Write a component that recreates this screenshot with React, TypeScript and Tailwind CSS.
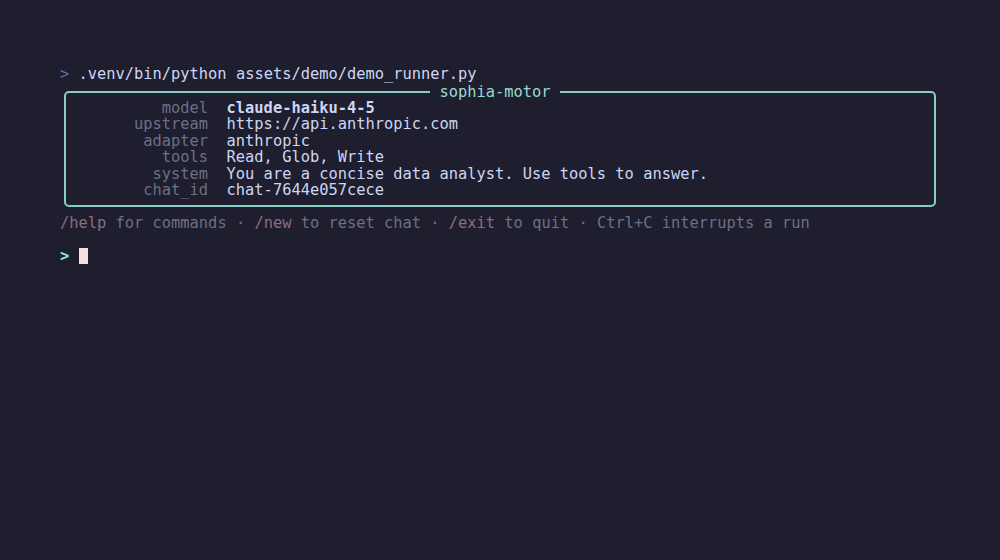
import React from "react";

const rows: [string, string, boolean?][] = [
  ["model", "claude-haiku-4-5", true],
  ["upstream", "https://api.anthropic.com"],
  ["adapter", "anthropic"],
  ["tools", "Read, Glob, Write"],
  ["system", "You are a concise data analyst. Use tools to answer."],
  ["chat_id", "chat-7644e057cece"],
];

export default function App() {
  return (
    <div
      className="w-[1000px] h-[560px] bg-[#1e1e2e] text-[#cdd6f4] pl-[60px] pt-[66px] overflow-hidden"
      style={{ fontFamily: '"DejaVu Sans Mono", monospace' }}
    >
      <div className="text-[15.38px] leading-[16.45px] whitespace-pre">
        <div className="h-[16.45px]">
          <span className="text-[#5b6fae]">&gt;</span> .venv/bin/python assets/demo/demo_runner.py
        </div>
        <div className="relative mt-[8.6px] mb-[7.6px] ml-[calc(0.5ch-1px)] w-[calc(94ch+2px)] border-2 border-[#86cdc2] rounded-[5px] pt-[6.85px] pb-[6.85px] pl-[calc(0.5ch-1px)]">
          <div className="absolute top-[-9.2px] left-[calc(39.5ch-1px)] h-[16.45px] bg-[#1e1e2e] text-[#94dccf]">
            {" sophia-motor "}
          </div>
          {rows.map(([k, v, b]) => (
            <div key={k} className="flex h-[16.45px]">
              <span className="w-[15ch] text-right text-[#6c7086]">{k}</span>
              <span className={"ml-[2ch] " + (b ? "font-bold" : "")}>{v}</span>
            </div>
          ))}
        </div>
        <div className="h-[16.45px] text-[#6c7086]">
          <span className="text-[#8a6f82]">/help</span> for commands · <span className="text-[#8a6f82]">/new</span> to reset chat · <span className="text-[#8a6f82]">/exit</span> to quit · Ctrl+C interrupts a run
        </div>
        <div className="h-[16.45px]"></div>
        <div className="h-[16.45px] flex items-center">
          <span className="text-[#94e2d5] font-bold">&gt;</span>
          <span className="inline-block w-[1ch]"></span>
          <span className="inline-block w-[1ch] h-[16.45px] bg-[#f5e0dc]"></span>
        </div>
      </div>
    </div>
  );
}
